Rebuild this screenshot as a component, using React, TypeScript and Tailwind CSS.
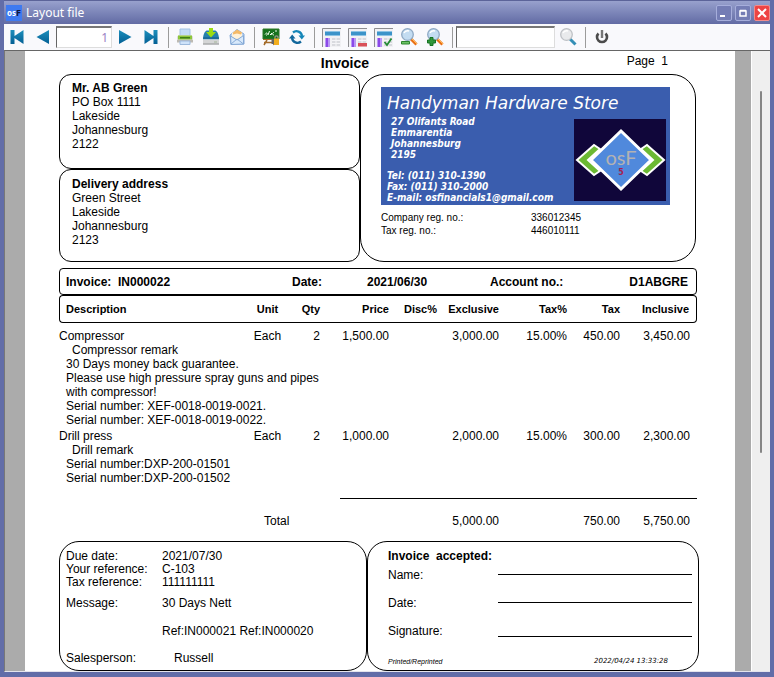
import React from "react";

type Kids = { children?: React.ReactNode };

function ToolButton({ label, children }: Kids & { label: string }) {
  return (
    <button type="button" aria-label={label} className="flex h-6 w-[26px] shrink-0 items-center justify-center">
      {children}
    </button>
  );
}

function Separator() {
  return (
    <div className="flex h-[21px] w-2 shrink-0 justify-center">
      <div className="w-px bg-[#9b9b9b]" />
    </div>
  );
}

function BlueArrow({ back, bar }: { back?: boolean; bar?: boolean }) {
  return (
    <svg width="16" height="16" viewBox="0 0 16 16">
      <defs>
        <linearGradient id="arrow" x1="0" y1="0" x2="0" y2="1">
          <stop offset="0" stopColor="#1d8fbc" />
          <stop offset="1" stopColor="#035f94" />
        </linearGradient>
      </defs>
      <g fill="url(#arrow)" transform={back ? "translate(16 0) scale(-1 1)" : undefined}>
        {bar ? <path d="M1.500 1 10.500 7V1H14.500v14H10.500V9l-9 6z" /> : <path d="M2 1 14.500 8 2 15z" />}
      </g>
    </svg>
  );
}

function PrinterIcon() {
  return (
    <svg width="18" height="18" viewBox="0 0 18 18">
      <path d="M4 1h10v7H4z" fill="#c3dcf6" stroke="#a3c2e4" />
      <path d="M1 8.500 3 7h12l2 1.500V14H1z" fill="#dcdcd8" />
      <path d="M2 7.500h14v4H2z" fill="#8cc63a" />
      <path d="M4 9h10v1.500H4z" fill="#3f7d16" />
      <path d="M1 12h16v2.500H1z" fill="#bdbab3" />
      <path d="M4 13h10v3.500H4z" fill="#cfe3fa" stroke="#9db9dc" />
    </svg>
  );
}

function SaveIcon() {
  return (
    <svg width="18" height="18" viewBox="0 0 18 18">
      <path d="M4.500 2.500h9C16 4 17 8 17 11.500H1C1 8 2 4 4.500 2.500z" fill="#2580ad" />
      <path d="M1.500 9 1 11h16l-.5-2z" fill="#1b6c9b" />
      <path d="M1 11.500h16v5H1z" fill="#d4d5d6" />
      <path d="M1 15.500h16v1H1z" fill="#929496" />
      <path d="M12 13.500h3v1h-3z" fill="#a5b59a" />
      <path d="M7 0h4v4h3L9 9.500 4 4h3z" fill="#9bdc12" />
    </svg>
  );
}

function MailIcon() {
  return (
    <svg width="18" height="18" viewBox="0 0 18 18">
      <path d="M2 7 9 1.500 16 6v10l-13 .5z" fill="#bcd6f4" stroke="#86aad7" />
      <path d="M4 5 9 2l5 3v4l-5 3-5-3z" fill="#fff2d9" />
      <path d="M5 4.500 9 1.500l5 3-1 2-4-1-4 1z" fill="#f4ba69" />
      <path d="m2.500 8 6.500 4 6.500-4.500V16L3 16.500z" fill="#d8e9fb" stroke="#86aad7" />
      <path d="m3 16 6-5 6.500 5" fill="none" stroke="#86aad7" />
    </svg>
  );
}

function BoardIcon() {
  return (
    <svg width="18" height="18" viewBox="0 0 18 18">
      <path d="m5 12-3 5M11 12l1 5M2 14.500h9" stroke="#a36b2a" strokeWidth="1.500" />
      <path d="M1 1h16v10H1z" fill="#17711d" stroke="#2f7a2a" />
      <path d="M1 11.500h16" stroke="#a36b2a" />
      <path d="M3 6.500c2-3 3-1 1.500 1M6 7l1.500-4M8 6.500h1.500V5M12 4.500c-2 0-2 2.500 0 2.500M13 3h2" fill="none" stroke="#f2fff0" />
      <path d="M13 10.500V9c0-1.500 3-1.500 3 0v1.500" fill="none" stroke="#99938a" strokeWidth="1.300" />
      <path d="M12 10.500h5V17h-5z" fill="#f2ae1e" />
      <path d="M9.500 11H12v5H9.500z" fill="#666" />
    </svg>
  );
}

function RefreshIcon() {
  return (
    <svg width="16" height="16" viewBox="0 0 16 16" fill="none" strokeWidth="2.300">
      <path d="M4 3.500A5.500 5.500 0 0 1 13 7" stroke="#1585b8" />
      <path d="M12 12.500A5.500 5.500 0 0 1 3 9" stroke="#12679c" />
      <path d="M9.500 6.500H16l-3.200 4z" fill="#1585b8" />
      <path d="M6.500 9.500H0l3.200-4z" fill="#12679c" />
    </svg>
  );
}

function LayoutIcon({ mark }: { mark?: "remove" | "accept" }) {
  return (
    <svg width="19" height="19" viewBox="0 0 19 19">
      <path d="M0 0h19v19H0z" fill="#f1f1f4" />
      <path d="M.5 19V.5H19" fill="none" stroke="#8d8d91" />
      <path d="M3 3h15v5H3z" fill="#8cc3e5" />
      <path d="M3 4h15v3H3z" fill="#3c93c9" />
      <path d="M3 10h5v9H3z" fill="#b997f5" />
      <path d="M4 10h2v9H4z" fill="#8b49e8" />
      <path d="M10 10h8v8h-8z" fill="#d9dadf" />
      <path d="M10 12.500h8M10 15.500h8M14 10v8" stroke="#f5f5f8" />
      {mark === "remove" && <path d="M10 15h9v3.500h-9z" fill="#d95059" />}
      {mark === "accept" && <path d="m10.500 14 2.500 3 4.500-6.500" fill="none" stroke="#238a35" strokeWidth="1.800" />}
    </svg>
  );
}

function MagnifierIcon({ mark }: { mark?: "minus" | "plus" }) {
  return (
    <svg width="18" height="18" viewBox="0 0 18 18">
      <path d="m11 11 5.500 5.500" stroke={mark ? "#e96e16" : "#348fb6"} strokeWidth="3" />
      {mark && <path d="m12 11 5 5" stroke="#ffbd55" />}
      <circle cx="7.500" cy="6.500" r="5.800" fill={mark ? "#c3dcf1" : "#e9eaec"} stroke={mark ? "#8fa9c4" : "#bec1c5"} strokeWidth="1.300" />
      <path d="M4 5c1-2 3-2.500 5-2" fill="none" stroke="#fff" strokeWidth="1.500" />
      {mark === "minus" && <path d="M1.500 13.500h8v2.500h-8z" fill="#6cc266" stroke="#2d852d" />}
      {mark === "plus" && <path d="M4 9.500h3v2.500h2.500v3H7v2.500H4V15H1.500v-3H4z" fill="#31963a" stroke="#157323" />}
    </svg>
  );
}

function PowerIcon() {
  return (
    <svg width="16" height="16" viewBox="0 0 16 16" fill="none">
      <path d="M4.500 4.500a5 5 0 1 0 7 0" stroke="#4c4c4c" strokeWidth="2.600" />
      <path d="M8 1v8" stroke="#777" strokeWidth="2.400" />
    </svg>
  );
}

function TitleBar() {
  const box = "flex h-4 w-4 items-center justify-center rounded-[2px] border";
  return (
    <header className="flex h-6 shrink-0 items-center border-t border-[#5c6499] bg-linear-to-b from-[#98a1cd] to-[#626ba4] pl-0.5">
      <div className="flex h-4 w-4 items-center justify-center bg-[#3f7af0]">
        <span className="text-[8px] font-bold text-white">os</span>
        <span className="text-[9px] font-bold text-[#101638]">F</span>
      </div>
      <h1 className="ml-1 flex-1 font-['Noto_Sans','Open_Sans',sans-serif] text-xs text-white">Layout file</h1>
      <div className="flex gap-[3px]">
        <button type="button" aria-label="Minimize" className={box + " border-[#a6aedb] bg-[#747db5]"}>
          <svg width="12" height="12"><path d="M2 8h5v2H2z" fill="#fff" /></svg>
        </button>
        <button type="button" aria-label="Maximize" className={box + " border-[#a6aedb] bg-[#747db5]"}>
          <svg width="12" height="12"><path d="M3 4h6v5H3zM3 3.500h6" fill="none" stroke="#fff" strokeWidth="1.500" /></svg>
        </button>
        <button type="button" aria-label="Close" className={box + " border-[#f18b8b] bg-[#ee4444]"}>
          <svg width="12" height="12"><path d="m2 2 8 8M10 2l-8 8" stroke="#fff" strokeWidth="2" /></svg>
        </button>
      </div>
    </header>
  );
}

function Toolbar() {
  const field = "h-[22px] shrink-0 border-t-2 border-l border-r border-b border-t-[#777] border-l-[#666] border-r-[#ddd] border-b-[#ddd] bg-white px-[3px] outline-none";
  return (
    <div role="toolbar" className="flex h-[26px] shrink-0 items-center bg-[#f9f9fc]">
      <ToolButton label="First page"><BlueArrow back bar /></ToolButton>
      <ToolButton label="Previous page"><BlueArrow back /></ToolButton>
      <input aria-label="Page number" defaultValue="1" className={field + " w-14 text-right font-['Noto_Sans',sans-serif] text-xs text-[#9b7fc4]"} />
      <ToolButton label="Next page"><BlueArrow /></ToolButton>
      <ToolButton label="Last page"><BlueArrow bar /></ToolButton>
      <Separator />
      <ToolButton label="Print"><PrinterIcon /></ToolButton>
      <ToolButton label="Save"><SaveIcon /></ToolButton>
      <ToolButton label="E-mail"><MailIcon /></ToolButton>
      <Separator />
      <ToolButton label="Design"><BoardIcon /></ToolButton>
      <ToolButton label="Refresh"><RefreshIcon /></ToolButton>
      <Separator />
      <ToolButton label="Layout"><LayoutIcon /></ToolButton>
      <ToolButton label="Remove layout"><LayoutIcon mark="remove" /></ToolButton>
      <ToolButton label="Accept layout"><LayoutIcon mark="accept" /></ToolButton>
      <ToolButton label="Zoom out"><MagnifierIcon mark="minus" /></ToolButton>
      <ToolButton label="Zoom in"><MagnifierIcon mark="plus" /></ToolButton>
      <Separator />
      <input aria-label="Search text" className={field + " w-[99px] text-xs"} />
      <ToolButton label="Search"><MagnifierIcon /></ToolButton>
      <Separator />
      <ToolButton label="Close preview"><PowerIcon /></ToolButton>
    </div>
  );
}

function Address({ title, lines, className }: { title: string; lines: string[]; className: string }) {
  return (
    <address className={"rounded-xl border border-black pl-3 leading-[14px] not-italic " + className}>
      <strong>{title}</strong>
      {lines.map((l) => <div key={l}>{l}</div>)}
    </address>
  );
}

function StoreCard() {
  return (
    <div className="bg-[#3a5dae] pt-1.5 pr-1 pl-1.5 text-white">
      <div className="font-['DejaVu_Sans',sans-serif] text-[17px] leading-5 whitespace-nowrap italic">Handyman Hardware Store</div>
      <div className="flex h-[92px] justify-between">
        <div className="pt-[3px] font-['DejaVu_Sans_Condensed','DejaVu_Sans',sans-serif] text-[10px] leading-[11px] font-bold whitespace-nowrap italic">
          <div className="pl-1">27 Olifants Road</div>
          <div className="pl-1">Emmarentia</div>
          <div className="pl-1">Johannesburg</div>
          <div className="pl-1">2195</div>
          <div className="mt-[10px]">Tel: (011) 310-1390</div>
          <div>Fax: (011) 310-2000</div>
          <div>E-mail: osfinancials1@gmail.com</div>
        </div>
        <svg className="mt-1.5 shrink-0" width="92" height="82" viewBox="0 0 92 82">
          <path d="M0 0h92v82H0z" fill="#10063a" />
          <path d="m3 41 17-15 6 4-12 11 12 11-6 4z" fill="#6bb933" stroke="#fff" strokeWidth="2" />
          <path d="m90 41-17-15-6 4 12 11-12 11 6 4z" fill="#6bb933" stroke="#fff" strokeWidth="2" />
          <path d="M47 12 77 41 47 70 17 41z" fill="#5089dc" stroke="#fff" strokeWidth="3" />
          <text x="47" y="46" textAnchor="middle" fill="#b3b2b3" fontFamily="Lato, sans-serif" fontSize="20">osF</text>
          <text x="47" y="56" textAnchor="middle" fill="#a51f50" fontFamily="DejaVu Sans, sans-serif" fontWeight="bold" fontSize="8">5</text>
        </svg>
      </div>
    </div>
  );
}

const items = [
  {
    name: "Compressor", price: "1,500.00", exclusive: "3,000.00", tax: "450.00", inclusive: "3,450.00", remark: "Compressor remark",
    notes: ["30 Days money back guarantee.", "Please use high pressure spray guns and pipes", "with compressor!", "Serial number: XEF-0018-0019-0021.", "Serial number: XEF-0018-0019-0022."],
  },
  {
    name: "Drill press", price: "1,000.00", exclusive: "2,000.00", tax: "300.00", inclusive: "2,300.00", remark: "Drill remark",
    notes: ["Serial number:DXP-200-01501", "Serial number:DXP-200-01502"],
  },
];

function ItemTable() {
  const th = "h-7 border-y border-black p-0 text-right font-bold";
  const sum = "h-11 border-t border-black p-0 text-right";
  return (
    <table className="w-full table-fixed border-separate border-spacing-0 leading-[14px]">
      <colgroup>
        <col />
        <col className="w-[55px]" />
        <col className="w-[45px]" />
        <col className="w-[49px]" />
        <col className="w-[48px]" />
        <col className="w-[62px]" />
        <col className="w-[68px]" />
        <col className="w-[53px]" />
        <col className="w-[77px]" />
      </colgroup>
      <thead className="text-[11px]">
        <tr>
          <th className="h-7 rounded-l border-y border-l border-black p-0 pl-1.5 text-left">Description</th>
          <th className="h-7 border-y border-black p-0 text-center">Unit</th>
          <th className="h-7 border-y border-black p-0 pr-5 text-right">Qty</th>
          <th className={th}>Price</th>
          <th className={th}>Disc%</th>
          <th className={th}>Exclusive</th>
          <th className={th}>Tax%</th>
          <th className={th}>Tax</th>
          <th className="h-7 rounded-r border-y border-r border-black p-0 pr-[7px] text-right">Inclusive</th>
        </tr>
      </thead>
      {items.map((item, i) => (
        <tbody key={item.name}>
          <tr className="text-right align-bottom">
            <td className={i === 0 ? "h-5 p-0 text-left" : "h-4 p-0 text-left"}>{item.name}</td>
            <td className="p-0 text-center">Each</td>
            <td className="p-0 pr-5">2</td>
            <td className="p-0">{item.price}</td>
            <td className="p-0" />
            <td className="p-0">{item.exclusive}</td>
            <td className="p-0">15.00%</td>
            <td className="p-0">{item.tax}</td>
            <td className="p-0 pr-[7px]">{item.inclusive}</td>
          </tr>
          <tr>
            <td colSpan={9} className={i === 0 ? "p-0 pl-[7px]" : "p-0 pb-[13px] pl-[7px]"}>
              <div className="pl-1.5">{item.remark}</div>
              {item.notes.map((n) => <div key={n}>{n}</div>)}
            </td>
          </tr>
        </tbody>
      ))}
      <tfoot>
        <tr>
          <td className="p-0" />
          <td colSpan={2} className="border-t border-transparent p-0 pl-6">Total</td>
          <td className={sum} />
          <td className={sum} />
          <td className={sum}>5,000.00</td>
          <td className={sum} />
          <td className={sum}>750.00</td>
          <td className={sum + " pr-[7px]"}>5,750.00</td>
        </tr>
      </tfoot>
    </table>
  );
}

function SignLine({ label, low }: { label: string; low?: boolean }) {
  return (
    <div className="mb-1.5 flex h-[22px]">
      <span className="w-[110px] pt-1">{label}</span>
      <span className={low ? "h-4 flex-1 border-b border-black" : "h-2.5 flex-1 border-b border-black"} />
    </div>
  );
}

function InvoicePage() {
  return (
    <main className="min-w-0 flex-1 bg-white pr-9 pl-[34px] font-['Liberation_Sans',Arial,sans-serif] text-xs text-black">
      <div className="flex h-[23px] items-center">
        <h2 className="w-[310px] text-right text-sm font-bold">Invoice</h2>
        <p className="flex-1 pr-[31px] pb-1 text-right whitespace-pre">Page  1</p>
      </div>

      <section className="mr-[3px] flex">
        <div className="flex flex-1 flex-col">
          <Address title="Mr. AB Green" lines={["PO Box 1111", "Lakeside", "Johannesburg", "2122"]} className="h-[95px] pt-1.5" />
          <Address title="Delivery address" lines={["Green Street", "Lakeside", "Johannesburg", "2123"]} className="h-[93px] pt-[7px]" />
        </div>
        <div className="w-[336px] rounded-3xl border border-black pt-3 pr-[25px] pl-5">
          <StoreCard />
          <dl className="mt-1.5 grid grid-cols-[150px_1fr] text-[10px] leading-[13px]">
            <dt>Company reg. no.:</dt>
            <dd>336012345</dd>
            <dt>Tax reg. no.:</dt>
            <dd>446010111</dd>
          </dl>
        </div>
      </section>

      <section className="mt-1.5 mr-[2px]">
        <div className="flex h-[27px] items-center rounded border border-black pr-2 pl-1.5 font-bold">
          <span className="w-[226px] whitespace-pre">Invoice:  IN000022</span>
          <span className="w-[75px]">Date:</span>
          <span className="w-[123px]">2021/06/30</span>
          <span className="flex-1">Account no.:</span>
          <span>D1ABGRE</span>
        </div>
        <ItemTable />
      </section>

      <section className="-mt-px flex h-[130px] leading-[13px]">
        <dl className="grid flex-1 grid-cols-[96px_1fr] grid-rows-[13px_13px_13px_21px_28px_27px] content-start items-end rounded-[20px] border border-black pt-2 pl-1.5">
          <dt>Due date:</dt>
          <dd>2021/07/30</dd>
          <dt>Your reference:</dt>
          <dd>C-103</dd>
          <dt>Tax reference:</dt>
          <dd>111111111</dd>
          <dt>Message:</dt>
          <dd>30 Days Nett</dd>
          <dd className="col-start-2">Ref:IN000021 Ref:IN000020</dd>
          <dt className="col-start-1">Salesperson:</dt>
          <dd className="pl-3">Russell</dd>
        </dl>
        <div className="w-[332px] rounded-[20px] border border-black pt-2 pr-1.5 pl-5">
          <h3 className="mb-0.5 font-bold whitespace-pre">Invoice  accepted:</h3>
          <SignLine label="Name:" />
          <SignLine label="Date:" />
          <SignLine label="Signature:" low />
          <div className="mt-3.5 flex justify-between pr-6 text-[7px] leading-[9px] italic">
            <span>Printed/Reprinted</span>
            <span className="font-['DejaVu_Sans',sans-serif]">2022/04/24 13:33:28</span>
          </div>
        </div>
      </section>
    </main>
  );
}

export default function App() {
  return (
    <div className="flex min-h-screen flex-col border-x-4 border-b-[6px] border-[#626da8] bg-[#f9f9fc]">
      <TitleBar />
      <Toolbar />
      <div className="flex flex-1 border-t border-b border-l border-t-[#666] border-b-[#e4e4ec] border-l-[#777] bg-[#ababab] pl-5">
        <InvoicePage />
        <div className="w-4 shrink-0" />
        <div className="flex w-[19px] shrink-0 justify-center border-l border-white bg-[#efefef] pt-10">
          <div className="h-[362px] w-[2px] rounded bg-[#858585]" />
        </div>
      </div>
    </div>
  );
}
